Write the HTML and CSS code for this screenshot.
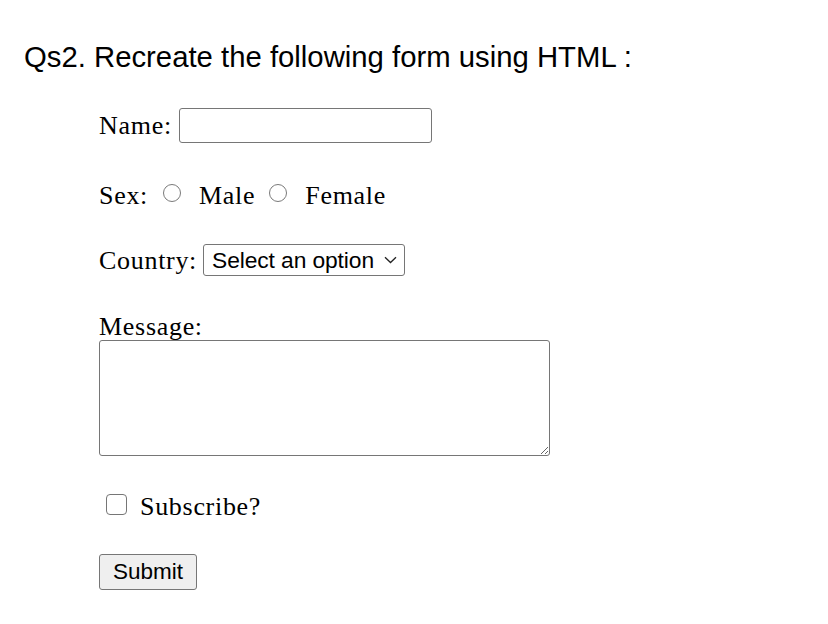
FILE: index.html
```html
<!DOCTYPE html>
<html lang="en">
<head>
<meta charset="utf-8">
<title>Qs2 Form</title>
<link rel="stylesheet" href="styles.css">
</head>
<body>
<h1 class="title">Qs2. Recreate the following form using HTML :</h1>
<form class="form">
  <div class="row row-name">
    <label class="lbl" for="name">Name:</label>
    <input class="text-input" id="name" type="text">
  </div>
  <div class="row row-sex">
    <span class="lbl">Sex:</span>
    <input class="radio radio-first" type="radio" name="sex" id="male">
    <label class="lbl opt" for="male">Male</label>
    <input class="radio radio-second" type="radio" name="sex" id="female">
    <label class="lbl opt" for="female">Female</label>
  </div>
  <div class="row row-country">
    <label class="lbl" for="country">Country:</label>
    <span class="select-wrap">
      <select class="select" id="country">
        <option>Select an option</option>
      </select>
      <svg class="chev" width="13" height="8" viewBox="0 0 13 8"><path d="M1 1.2 L6.5 6.5 L12 1.2" fill="none" stroke="#222" stroke-width="1.3"/></svg>
    </span>
  </div>
  <div class="block-message">
    <label class="lbl msg-lbl" for="msg">Message:</label>
    <textarea class="textarea" id="msg"></textarea>
  </div>
  <div class="row row-sub">
    <input class="check" type="checkbox" id="sub">
    <label class="lbl opt-sub" for="sub">Subscribe?</label>
  </div>
  <div class="row row-btn">
    <button class="btn" type="button">Submit</button>
  </div>
</form>
</body>
</html>
```

FILE: styles.css
```css
html, body {
  margin: 0;
  padding: 0;
  background: #ffffff;
}
body {
  padding: 40px 24px 0 24px;
  color: #000;
}
.title {
  margin: 0;
  font-family: "Liberation Sans", Arial, sans-serif;
  font-weight: normal;
  font-size: 29.3px;
  line-height: 1.15;
  color: #000;
}
.form {
  margin-left: 75px;
  display: flex;
  flex-direction: column;
  align-items: flex-start;
}
.row {
  display: flex;
  align-items: center;
}
.lbl {
  font-family: "Liberation Serif", "Times New Roman", serif;
  font-size: 26px;
  letter-spacing: 0.7px;
  line-height: 27px;
  color: #000;
}
.row-name {
  margin-top: 34px;
  height: 35px;
}
.text-input {
  box-sizing: border-box;
  margin: 0 0 0 7px;
  width: 253px;
  height: 35px;
  border: 1.5px solid #767676;
  border-radius: 3px;
  background: #fff;
  padding: 0 4px;
  font-family: "Liberation Sans", Arial, sans-serif;
  font-size: 20px;
  outline: none;
}
.row-sex {
  margin-top: 39px;
  height: 27px;
}
.radio {
  -webkit-appearance: none;
  appearance: none;
  box-sizing: border-box;
  width: 18px;
  height: 18px;
  border: 1.6px solid #7a7a7a;
  border-radius: 50%;
  background: #fff;
  margin: -4px 0 0 0;
  padding: 0;
}
.radio-first { margin-left: 15px; }
.radio-second { margin-left: 14px; }
.opt { margin-left: 18px; }
.row-country {
  margin-top: 35px;
  height: 33px;
}
.select-wrap {
  position: relative;
  display: inline-block;
  margin-left: 6px;
  height: 32px;
}
.select {
  -webkit-appearance: none;
  appearance: none;
  box-sizing: border-box;
  width: 202px;
  height: 32px;
  margin: 0;
  padding: 0 0 0 8px;
  border: 1.5px solid #767676;
  border-radius: 3px;
  background: #fff;
  font-family: "Liberation Sans", Arial, sans-serif;
  font-size: 22.8px;
  letter-spacing: -0.1px;
  color: #000;
  outline: none;
}
.chev {
  position: absolute;
  right: 8px;
  top: 12px;
  pointer-events: none;
}
.block-message {
  margin-top: 37px;
  display: flex;
  flex-direction: column;
  align-items: flex-start;
}
.msg-lbl {
  line-height: 26px;
}
.textarea {
  box-sizing: border-box;
  width: 451px;
  height: 116px;
  margin: 0;
  border: 1.5px solid #767676;
  border-radius: 3px;
  background: #fff;
  outline: none;
}
.row-sub {
  margin-top: 37px;
  height: 27px;
}
.check {
  -webkit-appearance: none;
  appearance: none;
  box-sizing: border-box;
  width: 21px;
  height: 21px;
  border: 1.6px solid #767676;
  border-radius: 4px;
  background: #fff;
  margin: -3px 0 0 7px;
  padding: 0;
}
.opt-sub { margin-left: 13px; }
.row-btn {
  margin-top: 34px;
}
.btn {
  box-sizing: border-box;
  width: 98px;
  height: 36px;
  margin: 0;
  padding: 0;
  border: 1.5px solid #767676;
  border-radius: 3px;
  background: #efefef;
  font-family: "Liberation Sans", Arial, sans-serif;
  font-size: 22.5px;
  color: #000;
}
```
